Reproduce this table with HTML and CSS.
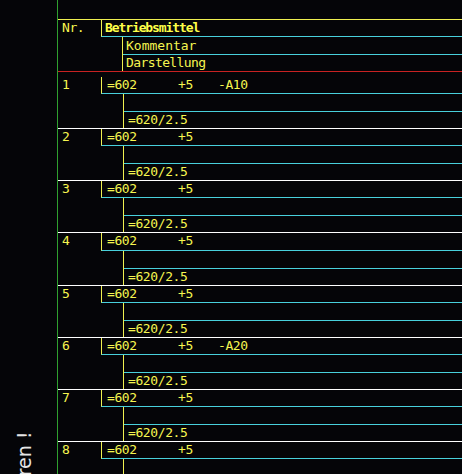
FILE: index.html
```html
<!DOCTYPE html>
<html lang="de">
<head>
<meta charset="utf-8">
<title>Betriebsmittel</title>
<link rel="stylesheet" href="styles.css">
</head>
<body>
<div class="screen">
  <div class="side">
    <div class="hint">Doppelklick zum Editieren !</div>
  </div>
  <div class="main">
    <div class="hdr">
      <div class="hdr-nr">Nr.</div>
      <div class="hdr-main">
        <div class="hdr-title">Betriebsmittel</div>
        <div class="hdr-sub">
          <div class="hdr-kom">Kommentar</div>
          <div class="hdr-dar">Darstellung</div>
        </div>
      </div>
    </div>

    <div class="rows">
      <div class="row first">
        <div class="r-top"><div class="r-nr">1</div><div class="r-bm"><span class="f1">=602</span><span class="f2">+5</span><span class="f3">-A10</span></div></div>
        <div class="r-sub"><div class="r-kom"></div><div class="r-dar">=620/2.5</div></div>
      </div>
      <div class="row">
        <div class="r-top"><div class="r-nr">2</div><div class="r-bm"><span class="f1">=602</span><span class="f2">+5</span></div></div>
        <div class="r-sub"><div class="r-kom"></div><div class="r-dar">=620/2.5</div></div>
      </div>
      <div class="row">
        <div class="r-top"><div class="r-nr">3</div><div class="r-bm"><span class="f1">=602</span><span class="f2">+5</span></div></div>
        <div class="r-sub"><div class="r-kom"></div><div class="r-dar">=620/2.5</div></div>
      </div>
      <div class="row tall">
        <div class="r-top"><div class="r-nr">4</div><div class="r-bm"><span class="f1">=602</span><span class="f2">+5</span></div></div>
        <div class="r-sub"><div class="r-kom"></div><div class="r-dar">=620/2.5</div></div>
      </div>
      <div class="row">
        <div class="r-top"><div class="r-nr">5</div><div class="r-bm"><span class="f1">=602</span><span class="f2">+5</span></div></div>
        <div class="r-sub"><div class="r-kom"></div><div class="r-dar">=620/2.5</div></div>
      </div>
      <div class="row">
        <div class="r-top"><div class="r-nr">6</div><div class="r-bm"><span class="f1">=602</span><span class="f2">+5</span><span class="f3">-A20</span></div></div>
        <div class="r-sub"><div class="r-kom"></div><div class="r-dar">=620/2.5</div></div>
      </div>
      <div class="row">
        <div class="r-top"><div class="r-nr">7</div><div class="r-bm"><span class="f1">=602</span><span class="f2">+5</span></div></div>
        <div class="r-sub"><div class="r-kom"></div><div class="r-dar">=620/2.5</div></div>
      </div>
      <div class="row">
        <div class="r-top"><div class="r-nr">8</div><div class="r-bm"><span class="f1">=602</span><span class="f2">+5</span></div></div>
        <div class="r-sub"><div class="r-kom"></div><div class="r-dar"></div></div>
      </div>
    </div>
  </div>
</div>
</body>
</html>
```
FILE: styles.css
```css
html, body {
  margin: 0;
  padding: 0;
  background: #050508;
}

.screen {
  display: flex;
  width: 462px;
  height: 474px;
  overflow: hidden;
  background: #050508;
  font-family: "DejaVu Sans Mono", monospace;
  font-size: 13px;
  letter-spacing: -0.4px;
  color: #f6f650;
}

.side {
  width: 57px;
  flex: 0 0 57px;
  display: flex;
  flex-direction: column;
  align-items: flex-start;
  padding: 431px 0 0 15px;
  box-sizing: border-box;
  overflow: hidden;
}

.hint {
  flex-shrink: 0;
  writing-mode: vertical-rl;
  transform: rotate(180deg);
  font-family: "DejaVu Sans", sans-serif;
  font-size: 19px;
  line-height: 19px;
  letter-spacing: 0;
  color: #e6e6e6;
  white-space: nowrap;
  display: flex;
  justify-content: flex-end;
  height: 200px;
}

.main {
  flex: 1;
  border-left: 1px solid #2fa02f;
  display: flex;
  flex-direction: column;
}

/* header */
.hdr {
  margin-top: 19px;
  display: flex;
  border-top: 1px solid #f0f050;
  border-bottom: 1px solid #c82222;
}

.hdr-nr {
  width: 43px;
  flex: 0 0 43px;
  padding-left: 4px;
  box-sizing: border-box;
  height: 16px;
  line-height: 16px;
}

.hdr-main {
  flex: 1;
  display: flex;
  flex-direction: column;
}

.hdr-title {
  height: 16px;
  line-height: 16px;
  border-left: 1px solid #f0f050;
  border-bottom: 1px solid #48d0dc;
  padding-left: 3px;
  font-weight: bold;
  letter-spacing: -1.1px;
  color: #ffff48;
}

.hdr-sub {
  margin-left: 21px;
  border-left: 1px solid #f0f050;
}

.hdr-kom {
  height: 17px;
  line-height: 17px;
  border-bottom: 1px solid #48d0dc;
  padding-left: 3px;
  letter-spacing: 0;
}

.hdr-dar {
  height: 16px;
  line-height: 16px;
  padding-left: 3px;
  letter-spacing: -0.6px;
}

/* rows */
.rows {
  display: flex;
  flex-direction: column;
  padding-top: 4px;
}

.row {
  border-top: 1px solid #ffffff;
  display: flex;
  flex-direction: column;
  flex-shrink: 0;
}

.row.first {
  border-top-color: transparent;
}

.r-top {
  display: flex;
  height: 17px;
}

.row.tall .r-top {
  height: 18px;
}

.r-nr {
  width: 43px;
  flex: 0 0 43px;
  padding-left: 4px;
  box-sizing: border-box;
  line-height: 16px;
}

.r-bm {
  flex: 1;
  border-left: 1px solid #f0f050;
  border-bottom: 1px solid #48d0dc;
  padding-left: 5px;
  line-height: 16px;
  white-space: nowrap;
  display: flex;
}

.f1 {
  width: 71px;
  flex: 0 0 71px;
}

.f2 {
  width: 40px;
  flex: 0 0 40px;
}

.r-sub {
  margin-left: 65px;
  border-left: 1px solid #f0f050;
  display: flex;
  flex-direction: column;
}

.r-kom {
  height: 17px;
  border-bottom: 1px solid #48d0dc;
}

.r-dar {
  height: 16px;
  line-height: 16px;
  padding-left: 4px;
}
```
